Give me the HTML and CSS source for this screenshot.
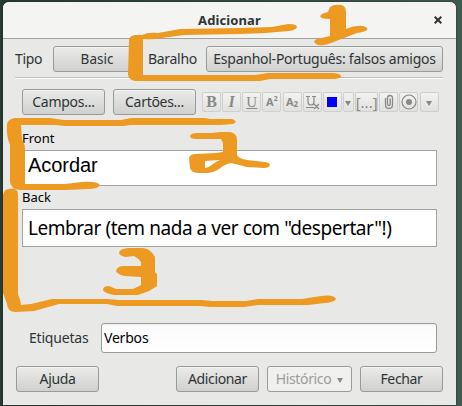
FILE: index.html
```html
<!DOCTYPE html>
<html lang="pt">
<head>
<meta charset="utf-8">
<title>Adicionar</title>
<link rel="stylesheet" href="styles.css">
</head>
<body>
<main class="window">
  <header class="titlebar"><h1>Adicionar</h1>
    <svg class="close" width="8" height="8" viewBox="0 0 8 8"><path d="M.7 .7L7.3 7.3M7.3 .7L.7 7.3"/></svg>
  </header>
  <section class="chooser">
    <span class="tipo">Tipo</span><button class="btn basic">Basic</button>
    <span class="baralho">Baralho</span><button class="btn deck"><span>Espanhol-Português: falsos amigos</span></button>
  </section>
  <section class="toolbar">
    <button class="btn std campos">Campos...</button><button class="btn std cartoes">Cartões...</button>
    <div class="tools">
      <button class="tool"><b>B</b></button>
      <button class="tool"><i><b>I</b></i></button>
      <button class="tool"><u>U</u></button>
      <button class="tool small">A<span class="sup">2</span></button>
      <button class="tool small">A<span class="sub">2</span></button>
      <button class="tool"><svg width="18" height="18" viewBox="0 0 18 18"><path d="M3 3.5H7M5 3.5V9Q5 12 8 12T11 9V3.5M9 3.5H13M3 14.5H11M11 11L16 16M16 11L11 16"/></svg></button>
      <button class="tool"><span class="swatch"></span></button>
      <button class="tool narrow"><span class="caret"></span></button>
      <button class="tool wide">[...]</button>
      <button class="tool"><svg width="18" height="18" viewBox="0 0 18 18"><path class="clip" d="M5.5 5V11.5Q5.5 15.5 9 15.5T12.5 11.5V5Q12.5 2.5 10 2.5T7.5 5V10.5Q7.5 12.5 9 12.5T10.2 10.5V5.5"/></svg></button>
      <button class="tool"><svg width="18" height="18" viewBox="0 0 18 18"><circle cx="9" cy="9" r="7"/><circle class="dot" cx="9" cy="9" r="3"/></svg></button>
      <button class="tool last"><span class="caret"></span></button>
    </div>
  </section>
  <section class="fields">
    <label>Front</label>
    <div class="field front">Acordar</div>
    <label class="backlabel">Back</label>
    <div class="field back">Lembrar (tem nada a ver com "despertar"!)</div>
  </section>
  <section class="tags"><span>Etiquetas</span><div class="tagbox">Verbos</div></section>
  <footer class="actions">
    <button class="btn std help">Ajuda</button>
    <button class="btn std">Adicionar</button>
    <button class="btn history">Histórico<span class="caret"></span></button>
    <button class="btn std">Fechar</button>
  </footer>
</main>
<svg class="marks" width="462" height="406" viewBox="0 0 462 406">
  <path d="M129 40Q129 36 135 35L142 35Q148 32 158 33L180 29L240 28L272 27L288 24Q297 24 297 27Q296 30 289 31L265 33L240 34L184 35L162 38Q153 40 143 39L143 75L255 75L268 73L334 73Q342 74 341 77Q339 79 332 79L270 79L260 81L135 81Q129 80 128 75Z"/>
  <path d="M320 16Q322 13 328 12L330 7Q334 4 341 5Q346 6 346 12L346 29Q355 25 363 26Q369 28 367 30Q364 32 357 33L331 43Q321 47 316 44Q312 41 317 39L330 36L330 19Q320 19 320 16Z"/>
  <path d="M7 124Q8 119 15 118L50 118L64 120L121 120L131 118L205 118L210 119L232 119Q237 121 235 123Q232 125 210 125L130 125L124 126L65 126L55 125L21 125L22 140Q25 143 25 150L25 184L65 184L82 182Q97 181 100 185Q98 189 88 189L66 190L20 190Q11 189 10 182L10 145Q6 136 7 124Z"/>
  <path d="M190 136Q191 133 197 133H212L220 132H230Q237 133 237 140V155Q239 159 247 160L265 162Q270 163 270 165Q269 168 264 168L247 167L231 163Q225 164 219 169Q213 173 206 173H200Q191 173 190 168L189 158Q190 154 196 154L215 153L223 152V143L221 139H196Q190 139 190 136ZM205 161V168Q210 167 213 164Q217 161 220 160Z"/>
  <path d="M3 195Q4 189 9 189Q18 187 18 195L18 294Q21 302 21 305L31 304L52 299L108 299L118 300L202 300L212 301L246 301L258 299L302 299L321 296Q334 294 336 299Q335 302 325 303L308 305L258 305L244 307L210 307L200 306L117 306L107 304L59 304L34 311L15 312Q7 311 7 304L3 293Z"/>
  <path d="M119 253Q119 249 128 248H142Q150 248 155 257V272L157 274V286L149 291L138 295H114Q104 293 103 290Q103 286 109 286L116 289H133L141 285V277L124 276Q117 274 116 271Q117 266 124 266H141V262Q138 258 134 256L126 257Q120 256 119 253Z"/>
</svg>
</body>
</html>
```
FILE: styles.css
```css
* { box-sizing: border-box; }
body { margin: 0; width: 462px; height: 406px; overflow: hidden; background: linear-gradient(90deg, #273b34 0 3px, #405b51 456px, #405b51); padding: 2px 0 0 3px; font: 14px/20px "Noto Sans", sans-serif; color: #2e3436; position: relative; }
.window { width: 453px; height: 403px; background: #e8e8e7; border-radius: 6px 6px 0 0; overflow: hidden; box-shadow: 0 0 2px #13211c; display: flex; flex-direction: column; }
.titlebar { height: 37px; flex: none; background: #f4f4f3; border-bottom: 1px solid #a2a2a0; display: flex; align-items: center; position: relative; }
h1 { font-size: 13px; line-height: 20px; letter-spacing: .1px; margin: 0; width: 100%; text-align: center; }
.close { position: absolute; right: 14px; top: 14px; fill: none; stroke: #2e3436; stroke-width: 2; }
button { font: inherit; color: inherit; padding: 0; margin: 0; }
.btn { height: 26px; border: 1px solid #999b98; border-radius: 3px; background: linear-gradient(#ebebea, #d0d0ce); box-shadow: inset 0 1px #f4f4f4; font-size: 14px; line-height: 20px; white-space: nowrap; flex: none; }
.std { width: 83px; }
.chooser { margin: 0 13px 0 12px; height: 39px; flex: none; border-bottom: 1px solid #bebebc; box-shadow: 0 1px #fff; display: flex; padding-top: 7px; line-height: 26px; }
.chooser span { letter-spacing: -.3px; }
.tipo { width: 38px; font-size: 14px; }
.basic { width: 88px; font-size: 13.5px; }
.baralho { width: 58px; margin-left: 7px; white-space: nowrap; }
.deck { width: 237px; display: flex; justify-content: center; align-items: center; }
.chooser .deck span { letter-spacing: -.25px; font-size: 14px; }
.toolbar { display: flex; margin: 11px 0 0 19px; height: 26px; flex: none; }
.campos { letter-spacing: -.25px; }
.cartoes { margin-left: 8px; letter-spacing: -.3px; }
.tools { display: flex; gap: 1px; margin: 3px 0 0 6px; }
.tool { width: 19px; height: 20px; flex: none; border: 1px solid #cfcfcd; border-radius: 2px; background: linear-gradient(#f2f2f1, #e1e1df); display: flex; justify-content: center; align-items: center; color: #888a85; font: 16px/18px "Liberation Serif", serif; }
.tool:nth-child(n+2) { margin-left: 0.15px; }
.tool u { text-underline-offset: 1px; font-size: 15px; }
.tool.small { font: bold 11px/18px "Noto Sans", sans-serif; }
.sup, .sub { font-size: 7px; position: relative; top: -3px; }
.sub { top: 2px; font-size: 8px; }
.tool.narrow { width: 11px; }
.tool.wide { width: 23px; font: 15px/18px "Noto Sans", sans-serif; }
.tool svg { flex: none; fill: none; stroke: #888a85; stroke-width: 1.2; }
.tool .clip { stroke-width: 1.3; }
.tool .dot { fill: #888a85; stroke: none; }
.swatch { width: 10px; height: 10px; background: #00f; }
.caret { border: 3px solid transparent; border-top: 5px solid #888a85; border-bottom: 0; margin-top: 3px; }
.fields { margin: 13px 19px 0; display: flex; flex-direction: column; flex: none; color: #000; }
label { height: 22px; font-size: 13px; line-height: 20px; }
.backlabel { height: 23px; line-height: 22px; letter-spacing: 0; }
.field { width: 415px; border: 1px solid #a2a2a0; background: #fff; white-space: nowrap; padding-left: 5px; }
.front { height: 36px; font: 20px/28px "Liberation Sans", sans-serif; letter-spacing: -.05px; }
.back { height: 38px; font-size: 19px; line-height: 37px; letter-spacing: -.45px; }
.tags { display: flex; margin: 76px 0 0 26px; height: 30px; line-height: 30px; flex: none; }
.tags span { width: 72px; letter-spacing: -.2px; }
.tagbox { width: 336px; color: #000; border: 1px solid #999b98; border-radius: 3px; background: linear-gradient(#f0f0ef, #fbfbfb 3px, #fff); padding-left: 2px; line-height: 28px; letter-spacing: -.2px; }
.actions { display: flex; gap: 8px; padding-left: 13px; margin-top: 13px; height: 26px; flex: none; }
.help { margin-right: 69px; }
.actions .btn { letter-spacing: -.35px; }
.history { width: 85px; background: #f0f0ef; color: #9a9c99; display: flex; justify-content: center; align-items: center; gap: 6px; }
.marks { position: absolute; left: 0; top: 0; pointer-events: none; fill: #ec9a22; fill-rule: evenodd; }
```
